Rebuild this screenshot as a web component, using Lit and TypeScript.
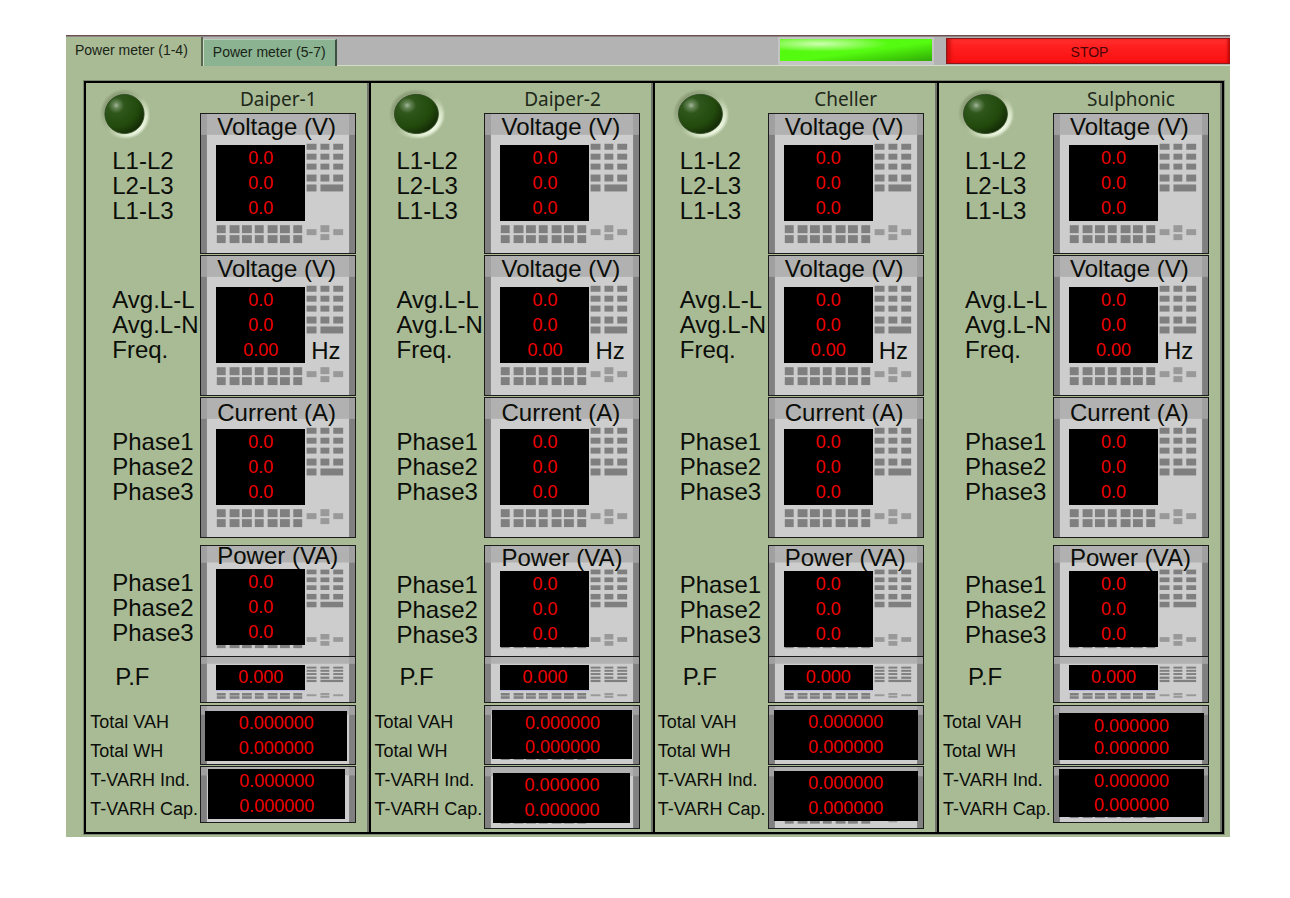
import { LitElement, html, css, svg } from "lit";
import { customElement, property, state } from "lit/decorators.js";

interface Reading {
  title?: string;
  kind: string;
  labels: string[];
  values: string[];
  unit?: string;
}

interface Station {
  name: string;
  variant: string;
}

const READINGS: Reading[] = [
  { title: "Voltage (V)", kind: "full", labels: ["L1-L2", "L2-L3", "L1-L3"], values: ["0.0", "0.0", "0.0"] },
  { title: "Voltage (V)", kind: "full", labels: ["Avg.L-L", "Avg.L-N", "Freq."], values: ["0.0", "0.0", "0.00"], unit: "Hz" },
  { title: "Current (A)", kind: "full current", labels: ["Phase1", "Phase2", "Phase3"], values: ["0.0", "0.0", "0.0"] },
  { title: "Power (VA)", kind: "power", labels: ["Phase1", "Phase2", "Phase3"], values: ["0.0", "0.0", "0.0"] },
  { kind: "factor", labels: ["P.F"], values: ["0.000"] },
];

const TOTAL_LABELS = ["Total VAH", "Total WH", "T-VARH Ind.", "T-VARH Cap."];

const STATIONS: Station[] = [
  { name: "Daiper-1", variant: "first" },
  { name: "Daiper-2", variant: "second" },
  { name: "Cheller", variant: "third" },
  { name: "Sulphonic", variant: "fourth" },
];

/* Instrument front: header band, side rails, keypad, soft keys, arrow pad. */
const KEY_COLS = [[107, 10], [121, 9], [134, 10]];
const KEY_ROWS = [[30, 6], [40, 6], [50, 6], [61, 7]];
const SOFT_COLS = [[16, 9], [29, 10], [41.5, 10], [54.5, 9], [67.5, 10], [80, 10], [93.5, 9]];

const faceplate = html`<svg class="face" viewBox="0 0 156 140" preserveAspectRatio="none" aria-hidden="true">
  <rect width="156" height="140" fill="#cdcdcd"></rect>
  <rect width="156" height="21" fill="#b1b1b1"></rect>
  <rect width="6" height="21" fill="#a0a0a0"></rect>
  <rect x="150" width="6" height="21" fill="#a0a0a0"></rect>
  <rect y="21" width="6" height="119" fill="#808080"></rect>
  <rect x="150" y="21" width="6" height="119" fill="#808080"></rect>
  <g fill="#7f7f7f">
    ${KEY_ROWS.map(([y, h]) => KEY_COLS.map(([x, w]) => svg`<rect x=${x} y=${y} width=${w} height=${h}></rect>`))}
    <rect x="107" y="71" width="10" height="7"></rect>
    <rect x="121" y="71" width="23" height="7"></rect>
    ${[112, 122].map((y) => SOFT_COLS.map(([x, w]) => svg`<rect x=${x} y=${y} width=${w} height="8"></rect>`))}
  </g>
  <g fill="#999999">
    <rect x="107" y="116" width="10" height="6"></rect>
    <rect x="121" y="112" width="9" height="7"></rect>
    <rect x="121" y="121" width="9" height="6"></rect>
    <rect x="134" y="116" width="10" height="6"></rect>
  </g>
</svg>`;

@customElement("status-lamp")
class StatusLamp extends LitElement {
  static styles = css`
    :host { display: block; }
    .lamp { display: block; width: 100%; height: 50px; }
  `;
  render() {
    return html`<svg class="lamp" viewBox="0 0 50 50" preserveAspectRatio="none" role="img" aria-label="off">
      <defs>
        <linearGradient id="ring" x1="0.12" y1="0.12" x2="0.85" y2="0.88">
          <stop offset="0" stop-color="#84956f"></stop>
          <stop offset="0.5" stop-color="#a9bb95"></stop>
          <stop offset="0.8" stop-color="#dbe8cb"></stop>
          <stop offset="1" stop-color="#f6fdec"></stop>
        </linearGradient>
        <radialGradient id="fade">
          <stop offset="0.86" stop-color="#a9bb95" stop-opacity="0"></stop>
          <stop offset="1" stop-color="#a9bb95"></stop>
        </radialGradient>
        <radialGradient id="bulb" cx="0.29" cy="0.28" r="0.78">
          <stop offset="0" stop-color="#a3b79b"></stop>
          <stop offset="0.1" stop-color="#668557"></stop>
          <stop offset="0.26" stop-color="#2f561b"></stop>
          <stop offset="0.7" stop-color="#234a0d"></stop>
          <stop offset="1" stop-color="#142b06"></stop>
        </radialGradient>
      </defs>
      <circle cx="25" cy="25" r="25" fill="url(#ring)"></circle>
      <circle cx="25" cy="25" r="25.3" fill="url(#fade)"></circle>
      <circle cx="24.5" cy="25" r="19.6" fill="url(#bulb)" stroke="#2a4520" stroke-width="0.8"></circle>
    </svg>`;
  }
}

@customElement("meter-panel")
class MeterPanel extends LitElement {
  @property({ attribute: false }) station!: Station;

  static styles = css`
    :host {
      display: block;
      box-sizing: border-box;
      border-left: 2px solid #000;
      border-right: 2px solid #6f7669;
      padding: 0 11px 3px 0;
      color: #0b0d09;
      font-family: "Liberation Sans", Arial, sans-serif;
    }
    .row { display: grid; grid-template-columns: 110px 156px; justify-content: end; }
    .labels { padding: 32px 0 0 22px; font-size: 24px; line-height: 25px; white-space: nowrap; }
    .labels p, .small p { margin: 0; }
    .head .labels { padding-top: 9px; }
    .lampbox { padding: 6px 0 0 10px; width: 50px; }
    .second .lampbox, .third .lampbox, .fourth .lampbox { padding-left: 15px; width: 56px; }
    .name {
      margin: 0;
      font: 400 19px/32px "Noto Sans", "Open Sans", sans-serif;
      height: 30px;
      text-align: center;
      color: #20281a;
    }
    .meter {
      box-sizing: border-box;
      display: grid;
      border: 1px solid #1c1c1c;
      box-shadow: inset 0 0 0 1px rgba(90, 90, 90, 0.35);
      height: 141px;
      grid-template-columns: 15px 89px 1fr;
      grid-template-rows: 31px auto 1fr;
    }
    .face { grid-area: 1 / 1 / -1 / -1; width: 100%; height: 100%; min-height: 0; }
    .meter h3 {
      grid-area: 1 / 1 / 2 / -1;
      margin: 0;
      padding-left: 16px;
      font-size: 24px;
      font-weight: 400;
      line-height: 26px;
      white-space: nowrap;
      z-index: 1;
    }
    .screen {
      grid-area: 2 / 2 / 3 / 3;
      padding-top: 1px;
      background: #000;
      color: #f00000;
      font-size: 18px;
      line-height: 25px;
      text-align: center;
    }
    .screen output { display: block; }
    .unit { grid-area: 2 / 3 / 3 / 4; align-self: end; padding-left: 6px; font-size: 24px; line-height: 25px; }
    .gap { margin-top: 1px; }
    .current h3 { padding-top: 2px; }
    .power .meter { height: 112px; grid-template-rows: 25px auto 1fr; }
    .power h3 { line-height: 23px; }
    .power .labels { padding-top: 27px; }
    .first .power .meter { grid-template-rows: 23px auto 1fr; }
    .first .power h3 { line-height: 19px; }
    .first .power .labels { padding-top: 25px; }
    .power { margin-top: 7px; }
    .factor { margin-top: -1px; }
    .factor .meter { height: 47px; grid-template-rows: 8px auto 1fr; }
    .factor .labels { padding: 8px 0 0 25px; }
    .factor .screen { padding: 0; border-bottom: 1px solid #b3b6dd; }

    .totals { margin-top: 2px; align-items: start; }
    .small { padding-top: 3px; font-size: 18px; line-height: 29px; white-space: nowrap; }
    .total { height: 60px; grid-template: 1fr / 1fr; }
    .total .screen {
      grid-area: 1 / 1;
      display: grid;
      align-content: center;
      margin: 5px 8px 3px 4px;
      padding: 0;
      line-height: 25px;
    }
    .reactive { margin-top: 1px; height: 57px; }
    .second .reactive, .third .reactive { height: 63px; }
    .reactive .screen { margin: 2px 10px 3px 7px; }
    .second .total .screen { margin: 4px 7px 5px 7px; line-height: 24px; }
    .second .reactive .screen { margin: 6px 9px 5px 8px; line-height: 25px; }
    .third .total .screen { margin: 4px 5px; }
    .third .reactive .screen { margin-bottom: 7px; }
    .fourth .total .screen { margin: 7px 4px 4px 5px; line-height: 22px; }
    .fourth .reactive .screen { margin: 2px 4px 5px 5px; line-height: 24px; }
  `;

  private screen(labels: string[], values: string[]) {
    return html`<div class="screen">
      ${values.map((v, i) => html`<output aria-label=${labels[i]}>${v}</output>`)}
    </div>`;
  }

  private meter(r: Reading) {
    return html`<div class="meter">
      ${faceplate}
      ${r.title ? html`<h3>${r.title}</h3>` : ""}
      ${this.screen(r.labels, r.values)}
      ${r.unit ? html`<span class="unit">${r.unit}</span>` : ""}
    </div>`;
  }

  render() {
    return html`<section class=${this.station.variant}>
      ${READINGS.map(
        (r, i) => html`<div class="row ${r.kind} ${i === 0 ? "head" : "gap"}">
          <div>
            ${i === 0 ? html`<div class="lampbox"><status-lamp></status-lamp></div>` : ""}
            <div class="labels">${r.labels.map((l) => html`<p>${l}</p>`)}</div>
          </div>
          <div>
            ${i === 0 ? html`<h2 class="name">${this.station.name}</h2>` : ""}
            ${this.meter(r)}
          </div>
        </div>`
      )}
      <div class="row totals">
        <div class="small">${TOTAL_LABELS.map((l) => html`<p>${l}</p>`)}</div>
        <div>
          <div class="meter total">
            ${faceplate} ${this.screen(TOTAL_LABELS.slice(0, 2), ["0.000000", "0.000000"])}
          </div>
          <div class="meter total reactive">
            ${faceplate} ${this.screen(TOTAL_LABELS.slice(2), ["0.000000", "0.000000"])}
          </div>
        </div>
      </div>
    </section>`;
  }
}

@customElement("app-root")
class AppRoot extends LitElement {
  @state() private tab = 0;

  static styles = css`
    :host { display: block; background: #fff; padding: 35px 60px 62px 66px; }
    .app { background: #a9bb95; font-family: "Liberation Sans", Arial, sans-serif; }
    .bar {
      display: flex;
      align-items: stretch;
      box-sizing: border-box;
      height: 31px;
      background: #b3b3b3;
      border-top: 1px solid #6e4f50;
      box-shadow: inset 0 1px #8d8585, inset 0 -1px #d3dcc9;
    }
    button { font: 400 14px/16px "Liberation Sans", Arial, sans-serif; margin: 0; border: 0; cursor: pointer; }
    .tab {
      margin-top: 3px;
      padding: 0 9px 2px;
      color: #1a2417;
      background: #8bb391;
      border-left: 1px solid #c9dcc4;
      border-top: 1px solid #b4cfb3;
      border-right: 2px solid #3c5040;
    }
    .tab.on {
      margin-top: 1px;
      padding: 0 13px 4px 9px;
      background: #a9bb95;
      border: 0;
      border-right: 2px solid #5a6650;
    }
    .grow { flex: 1; }
    .running {
      box-sizing: border-box;
      width: 156px;
      margin: 1px 12px 1px 0;
      border: 2px solid #c4c4c4;
      border-width: 2px 2px 4px;
      background:
        radial-gradient(ellipse 70px 8px at 26% 22%, rgba(220, 255, 195, 0.9), rgba(220, 255, 195, 0) 100%),
        linear-gradient(172deg, #52f80c 0%, #55fb10 55%, #3fd008 80%, #33a80a 100%);
    }
    .stop {
      width: 284px;
      margin: 2px 0;
      padding: 1px 0 0 2px;
      color: #4a0505;
      background: linear-gradient(#ff3030 0, #ff2020 30%, #fb1010 100%);
      border: 1px solid #8a1a1a;
      border-right: 0;
      box-shadow: inset 5px 0 4px -2px #c80c0c, inset -4px 0 3px -2px #b00808;
    }
    .panels {
      display: grid;
      grid-template-columns: 286fr 285fr 284fr 286fr;
      margin: 0 6px 0 18px;
      border: solid #000;
      border-width: 2px 2px 2px 0;
      box-shadow: 0 0 0 1px #7c876f;
    }
    .body { padding: 15px 0 3px; }
  `;

  render() {
    return html`<main class="app">
      <header class="bar">
        ${["Power meter (1-4)", "Power meter (5-7)"].map(
          (t, i) => html`<button class="tab ${this.tab === i ? "on" : ""}" @click=${() => (this.tab = i)}>${t}</button>`
        )}
        <span class="grow"></span>
        <span class="running" role="status" aria-label="running"></span>
        <button class="stop">STOP</button>
      </header>
      <div class="body">
        <div class="panels">
          ${STATIONS.map((s) => html`<meter-panel .station=${s}></meter-panel>`)}
        </div>
      </div>
    </main>`;
  }
}
